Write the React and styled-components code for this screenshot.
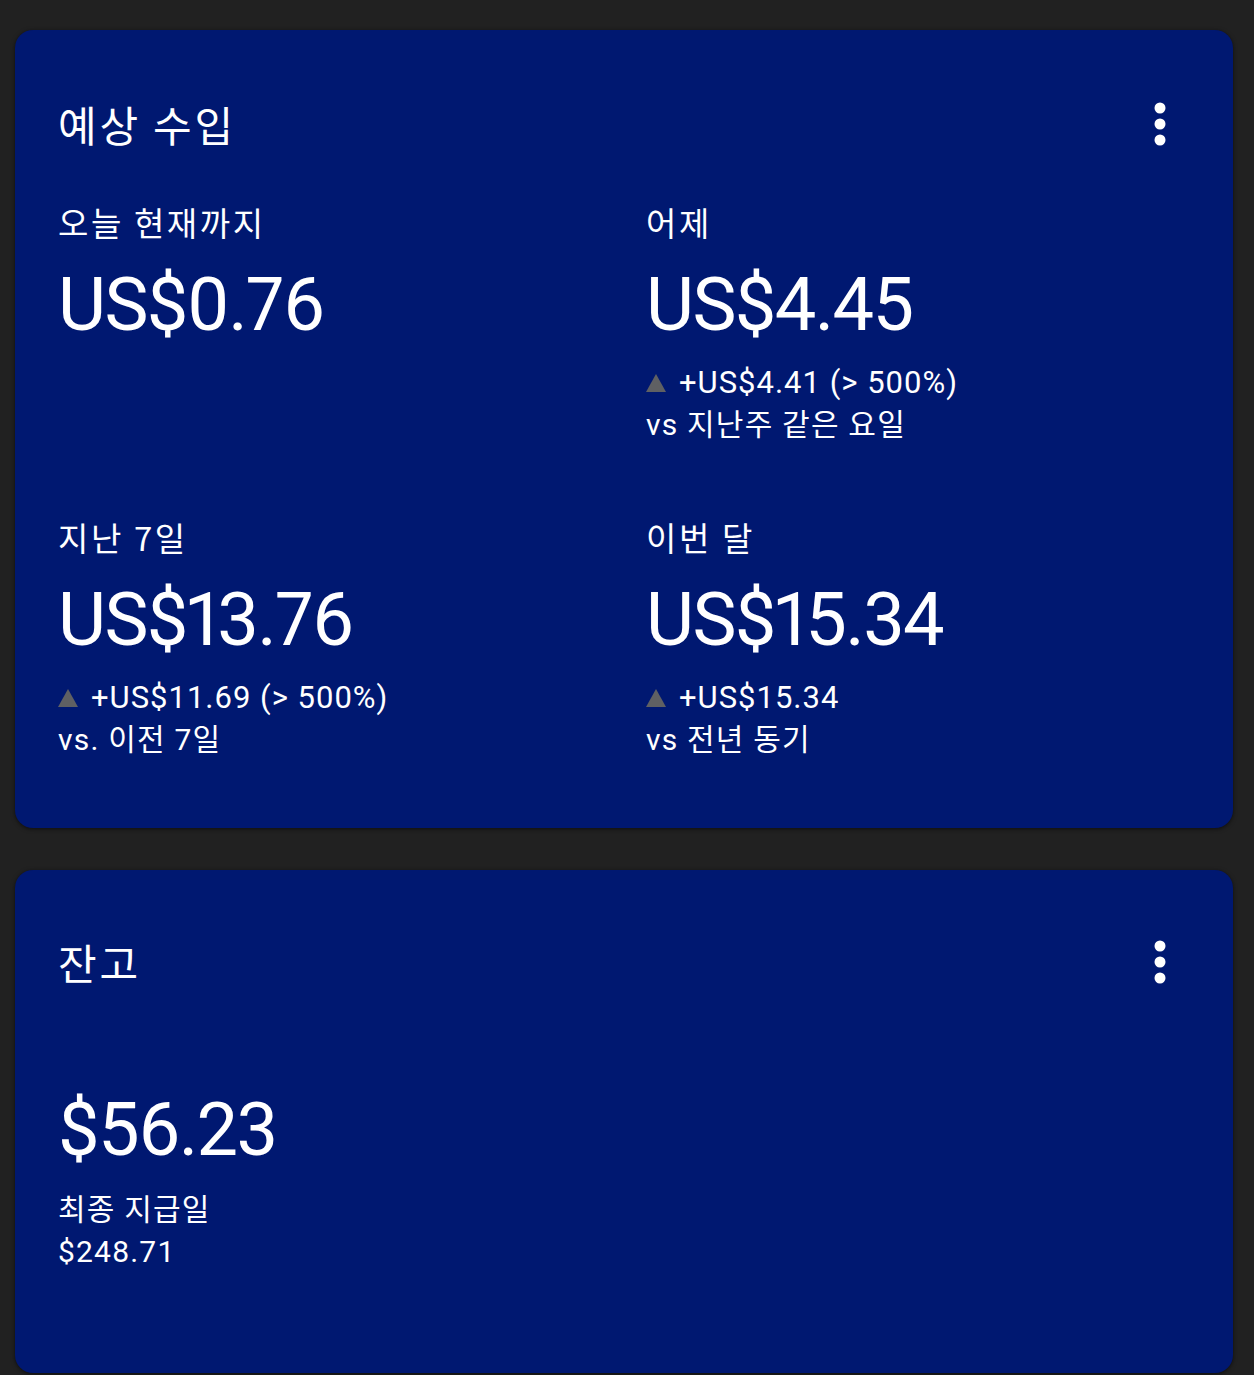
import React from 'react';
import styled, { createGlobalStyle } from 'styled-components';

const GlobalStyle = createGlobalStyle`
    html, body {
        margin: 0;
        padding: 0;
        background: #212121;
    }
    body {
        font-family: Roboto, "Noto Sans CJK KR", sans-serif;
        color: #ffffff;
    }
`

const Page = styled.div`
    display: flex;
    flex-direction: column;
    gap: 42px;
    padding: 30px 21px 0 15px;
    min-height: 1375px;
    box-sizing: border-box;
`

const Card = styled.section`
    background: #001871;
    border-radius: 18px;
    box-shadow: 0 1px 4px rgba(0, 0, 0, 0.6);
    padding: ${props => props.$pad};
    display: flex;
    flex-direction: column;
`

const CardHeader = styled.div`
    display: flex;
    align-items: center;
    justify-content: space-between;
    height: 56px;
`

const Title = styled.h2`
    margin: 0;
    font-family: "Noto Sans CJK KR", sans-serif;
    font-weight: 400;
    font-size: 42px;
    line-height: 56px;
    letter-spacing: 2.8px;
`

const MenuButton = styled.button`
    background: none;
    border: 0;
    padding: 0;
    width: 40px;
    height: 56px;
    display: flex;
    align-items: center;
    justify-content: center;
    margin-right: 53px;
`

const Grid = styled.div`
    display: grid;
    grid-template-columns: 544px 544px;
    column-gap: 44px;
    row-gap: 69px;
    margin-top: 48px;
`

const Stat = styled.div`
    display: flex;
    flex-direction: column;
`

const Label = styled.div`
    font-family: "Noto Sans CJK KR", sans-serif;
    font-size: 33px;
    line-height: 44px;
    letter-spacing: 2.6px;
`

const Amount = styled.div`
    font-family: Roboto, sans-serif;
    font-size: 74px;
    line-height: 80px;
    letter-spacing: -1.6px;
    font-variant-numeric: proportional-nums;
    margin-top: ${props => props.$top || '21px'};
`

const Delta = styled.div`
    display: flex;
    align-items: center;
    gap: 13px;
    font-size: 31px;
    line-height: 42px;
    letter-spacing: 1px;
    margin-top: 17px;
`

const Note = styled.div`
    font-family: Roboto, "Noto Sans CJK KR", sans-serif;
    font-size: 30px;
    line-height: 42px;
    letter-spacing: 1.2px;
    margin-top: ${props => props.$top || '0'};
`

const Up = () => (
    <svg width="20" height="18" viewBox="0 0 20 18">
        <polygon points="10,0 20,18 0,18" fill="#5f6063" />
    </svg>
)

const Dots = () => (
    <svg width="12" height="44" viewBox="0 0 12 44">
        <circle cx="6" cy="6" r="5.5" fill="#fff" />
        <circle cx="6" cy="22" r="5.5" fill="#fff" />
        <circle cx="6" cy="38" r="5.5" fill="#fff" />
    </svg>
)

const stats = [
    { label: '오늘 현재까지', amount: 'US$0.76' },
    { label: '어제', amount: 'US$4.45', delta: '+US$4.41 (> 500%)', note: 'vs 지난주 같은 요일' },
    { label: '지난 7일', amount: 'US$13.76', delta: '+US$11.69 (> 500%)', note: 'vs. 이전 7일' },
    { label: '이번 달', amount: 'US$15.34', delta: '+US$15.34', note: 'vs 전년 동기' },
]

const App = () => {
    return (
        <Page>
            <GlobalStyle />
            <Card $pad="66px 0 67px 43px">
                <CardHeader>
                    <Title>예상 수입</Title>
                    <MenuButton aria-label="더보기"><Dots /></MenuButton>
                </CardHeader>
                <Grid>
                    {stats.map(s => (
                        <Stat key={s.label}>
                            <Label>{s.label}</Label>
                            <Amount>{s.amount}</Amount>
                            {s.delta && (
                                <>
                                    <Delta><Up />{s.delta}</Delta>
                                    <Note>{s.note}</Note>
                                </>
                            )}
                        </Stat>
                    ))}
                </Grid>
            </Card>
            <Card $pad="64px 0 100px 43px">
                <CardHeader>
                    <Title>잔고</Title>
                    <MenuButton aria-label="더보기"><Dots /></MenuButton>
                </CardHeader>
                <Amount $top="100px">$56.23</Amount>
                <Note $top="19px">최종 지급일</Note>
                <Note>$248.71</Note>
            </Card>
        </Page>
    );
}

export default App;
